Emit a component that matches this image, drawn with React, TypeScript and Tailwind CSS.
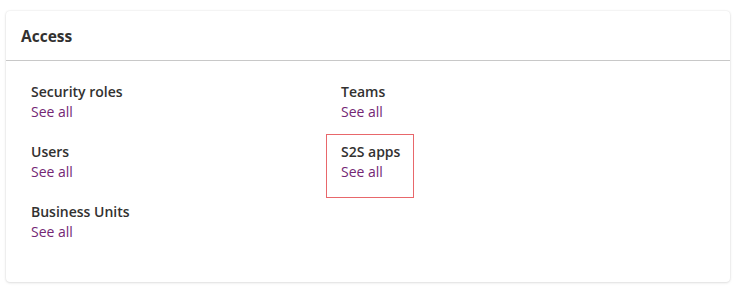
const items = [
  { title: 'Security roles' },
  { title: 'Teams' },
  { title: 'Users' },
  { title: 'S2S apps', highlight: true },
  { title: 'Business Units' },
];

export default function App() {
  return (
    <div className="min-h-screen bg-white pt-[11px] pl-[6px] pr-[11px] font-['Segoe_UI','Open_Sans',sans-serif] text-[#323130]">
      <div className="w-[724px] rounded-[4px] bg-white shadow-[0_0_2px_rgba(0,0,0,0.12),0_1px_3px_rgba(0,0,0,0.1)]">
        <div className="flex h-[50px] items-center border-b border-[#c8c8c8] px-[15px] pt-[2px]">
          <h2 className="text-[15.5px] font-bold">Access</h2>
        </div>
        <div className="grid grid-cols-[310px_1fr] px-[25px] pt-[10px] pb-[31px]">
          {items.map((it) => (
            <div key={it.title} className="relative h-[60px] pt-[11px]">
              {it.highlight && (
                <div className="pointer-events-none absolute top-[3px] -left-[15px] h-[64px] w-[88px] border border-[#e8676b]" />
              )}
              <div className="text-[14px] leading-[20px] font-semibold">{it.title}</div>
              <a href="#" className="block w-fit text-[14px] leading-[20px] text-[#742774]">
                See all
              </a>
            </div>
          ))}
        </div>
      </div>
    </div>
  );
}
